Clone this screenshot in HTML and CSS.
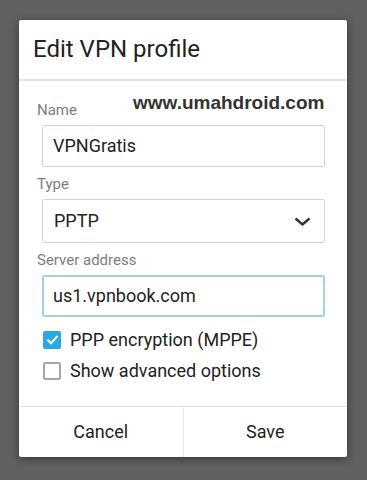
FILE: index.html
```html
<!doctype html>
<html lang="en">
<head>
    <meta charset="UTF-8">
    <meta name="viewport" content="width=device-width, initial-scale=1.0">
    <title>Edit VPN profile</title>
    <link rel="stylesheet" href="styles.css">
</head>
<body>
<div class="dialog">
    <div class="title">Edit VPN profile</div>
    <div class="content">
        <div class="watermark">www.umahdroid.com</div>

        <div class="label">Name</div>
        <div class="field">VPNGratis</div>

        <div class="label">Type</div>
        <div class="field select">
            <span>PPTP</span>
            <svg width="17" height="9" viewBox="0 0 17 9">
                <path d="M1.5 1.5 L8.5 7.5 L15.5 1.5" fill="none" stroke="#333" stroke-width="2.4"/>
            </svg>
        </div>

        <div class="label">Server address</div>
        <div class="field focus">us1.vpnbook.com</div>

        <div class="check">
            <span class="box checked">
                <svg width="17" height="17" viewBox="0 0 17 17">
                    <path d="M3.5 8.8 L7 12.2 L13.6 4.8" fill="none" stroke="#fff" stroke-width="2"/>
                </svg>
            </span>
            PPP encryption (MPPE)
        </div>
        <div class="check">
            <span class="box"></span>
            Show advanced options
        </div>
    </div>
    <div class="buttons">
        <div class="btn">Cancel</div>
        <div class="btn">Save</div>
    </div>
</div>
</body>
</html>
```

FILE: styles.css
```css
body{
    margin: 0;
    height: 480px;
    background-color: #606060;
    font-family: Roboto, "Liberation Sans", sans-serif;
    overflow: hidden;
}

.dialog{
    width: 328px;
    height: 437px;
    margin: 20px 0 0 19px;
    background-color: #fff;
    border-radius: 2px;
    box-shadow: 0 2px 8px rgba(0,0,0,.45);
    display: flex;
    flex-direction: column;
}

.title{
    height: 59px;
    padding-left: 14px;
    font-size: 24px;
    line-height: 58px;
    color: #222;
    border-bottom: 2px solid #e2e2e2;
}

.content{
    position: relative;
    flex: 1;
    padding: 20px 22px 0 23px;
}

.watermark{
    position: absolute;
    top: 11px;
    left: 114px;
    font-family: "Liberation Sans", Arial, sans-serif;
    font-weight: bold;
    font-size: 19px;
    color: #333;
}

.label{
    margin-left: -5px;
    font-size: 15px;
    line-height: 18px;
    color: #7d7d7d;
}

.field{
    height: 40px;
    margin: 6px 0 8px;
    padding-left: 10px;
    border: 1px solid #d4d4d4;
    border-radius: 2px;
    font-size: 18px;
    line-height: 40px;
    color: #222;
}

.select{
    height: 42px;
    line-height: 42px;
    padding-left: 11px;
    padding-right: 13px;
    display: flex;
    justify-content: space-between;
    align-items: center;
}

.select svg{
    display: block;
}

.focus{
    height: 38px;
    line-height: 38px;
    padding-left: 9px;
    border: 2px solid #9fd4e4;
    margin-bottom: 7px;
}

.check{
    height: 31px;
    display: flex;
    align-items: center;
    gap: 9px;
    font-size: 18px;
    color: #222;
}

.box{
    width: 14px;
    height: 14px;
    margin-left: 1px;
    border: 2px solid #a6a6a6;
    border-radius: 2px;
    position: relative;
}

.box.checked{
    border-color: #2aa8e0;
    background-color: #2aa8e0;
}

.box svg{
    position: absolute;
    top: -1.5px;
    left: -1.5px;
}

.buttons{
    height: 50px;
    display: flex;
    border-top: 1px solid #e4e4e4;
}

.btn{
    flex: 1;
    text-align: center;
    font-size: 18px;
    line-height: 50px;
    color: #222;
}

.btn + .btn{
    border-left: 1px solid #e8e8e8;
}
```
